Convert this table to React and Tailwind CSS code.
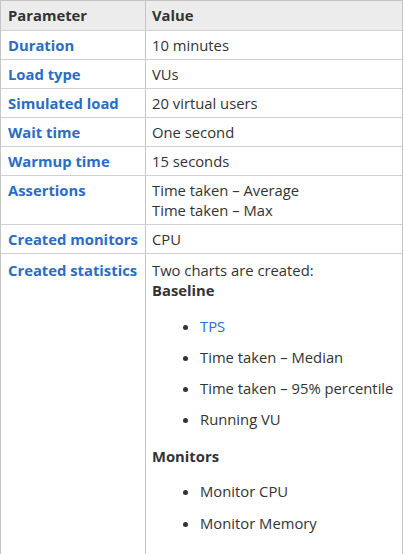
export default function App() {
  const rows = [
    ["Duration", ["10 minutes"]],
    ["Load type", ["VUs"]],
    ["Simulated load", ["20 virtual users"]],
    ["Wait time", ["One second"]],
    ["Warmup time", ["15 seconds"]],
    ["Assertions", ["Time taken – Average", "Time taken – Max"]],
    ["Created monitors", ["CPU"]],
  ];
  return (
    <div className="w-[404px] bg-white" style={{ fontFamily: '"Open Sans", sans-serif' }}>
      <div className="w-[403px] border border-[#c4c4c4] text-[14.8px] leading-[20px] text-[#333]">
        <div className="grid grid-cols-[144px_1fr] bg-[#ececec] font-bold text-[#333]">
          <div className="pl-[7px] pt-[4px] pb-[5px]">Parameter</div>
          <div className="border-l border-[#c4c4c4] pl-[6px] pt-[4px] pb-[5px]">Value</div>
        </div>
        {rows.map(([k, v]) => (
          <div key={k} className="grid grid-cols-[144px_1fr] border-t border-[#d0d0d0]">
            <div className="pl-[7px] pt-[4px] pb-[4px] font-bold text-[#2b6cc4]">{k}</div>
            <div className="border-l border-[#c4c4c4] pl-[6px] py-[4px]">
              {v.map((t) => (
                <div key={t}>{t}</div>
              ))}
            </div>
          </div>
        ))}
        <div className="grid grid-cols-[144px_1fr] border-t border-[#d0d0d0]">
          <div className="pl-[7px] pt-[6px] pb-[4px] font-bold text-[#2b6cc4]">Created statistics</div>
          <div className="border-l border-[#c4c4c4] pl-[6px] pt-[6px] pb-[40px]">
            <div>Two charts are created:</div>
            <div className="font-bold">Baseline</div>
            <ul className="mt-[16px] flex flex-col gap-[11px] pl-[48px] list-disc">
              <li><span className="text-[#2b6cc4]">TPS</span></li>
              <li>Time taken – Median</li>
              <li>Time taken – 95% percentile</li>
              <li>Running VU</li>
            </ul>
            <div className="mt-[17px] font-bold">Monitors</div>
            <ul className="mt-[15px] flex flex-col gap-[12px] pl-[48px] list-disc">
              <li>Monitor CPU</li>
              <li>Monitor Memory</li>
            </ul>
          </div>
        </div>
      </div>
    </div>
  );
}
